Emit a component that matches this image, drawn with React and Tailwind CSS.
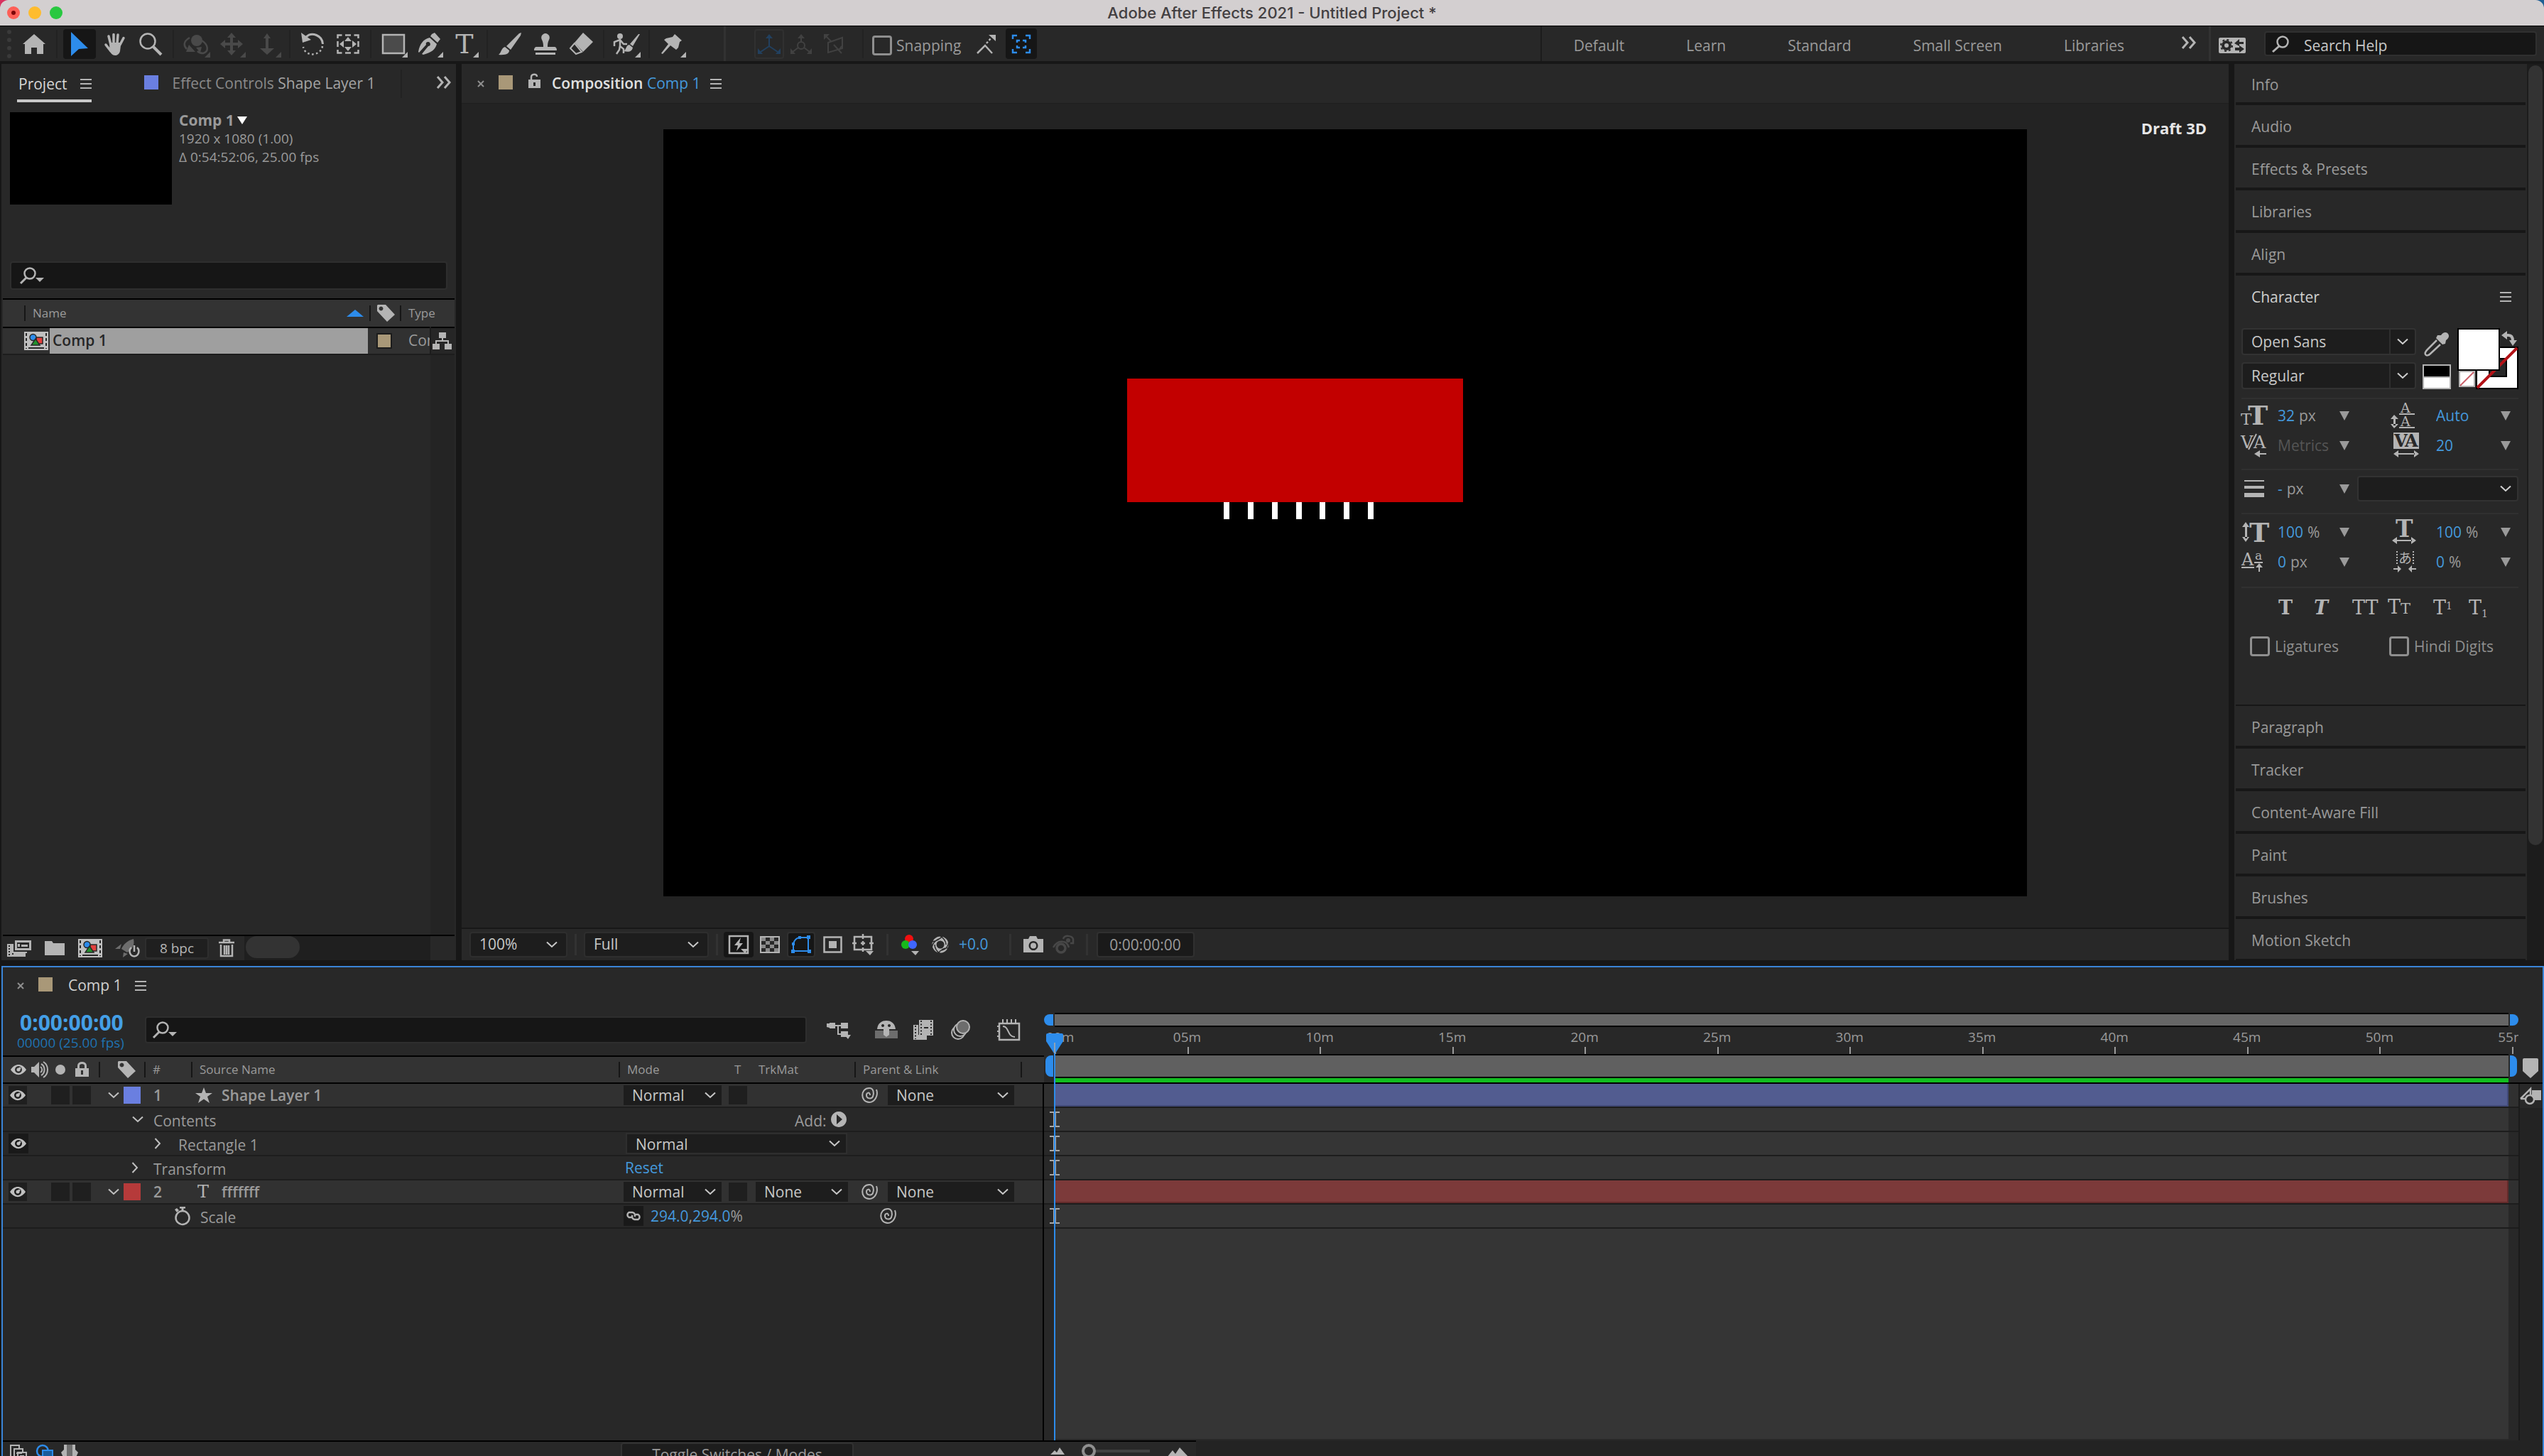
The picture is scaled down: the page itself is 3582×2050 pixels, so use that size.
import { useState } from "react"

const DURATION = 54.87

const layers = [
  { id: "1", kind: "layer", name: "Shape Layer 1", type: "shape", swatch: "bg-[#6a7fe0]", bar: "bg-[#525c90] border-[#414a78]" },
  { id: "contents", kind: "group", name: "Contents", open: true },
  { id: "rect", kind: "item", name: "Rectangle 1" },
  { id: "transform", kind: "group", name: "Transform", open: false },
  { id: "2", kind: "layer", name: "fffffff", type: "text", swatch: "bg-[#b63a3a]", bar: "bg-[#7c3a3a] border-[#632b2b]" },
  { id: "scale", kind: "property", name: "Scale" },
]

const marks = ["00m", "05m", "10m", "15m", "20m", "25m", "30m", "35m", "40m", "45m", "50m", "55m"]

/* ---------- Small shared pieces ---------- */

function Svg({ w, h, className = "", children }) {
  return (
    <svg width={w} height={h} viewBox={`0 0 ${w} ${h}`} fill="currentColor" className={`shrink-0 overflow-visible ${className}`} aria-hidden="true">
      {children}
    </svg>
  )
}

function Chevron({ className = "" }) {
  return (
    <Svg w={16} h={10} className={className}>
      <path d="M1 1.500l7 6.500 7-6.500" fill="none" stroke="currentColor" strokeWidth="2" />
    </Svg>
  )
}

function Triangle({ className = "text-[#9a9a9a]" }) {
  return (
    <Svg w={14} h={13} className={className}>
      <path d="M0 0h14L7 13z" />
    </Svg>
  )
}

function MenuLines() {
  return (
    <button aria-label="Panel menu" className="text-[#b4b4b4]">
      <Svg w={16} h={14}>
        <path d="M0 0h16v2H0zM0 6h16v2H0zM0 12h16v2H0z" />
      </Svg>
    </button>
  )
}

function MoreChevrons() {
  return (
    <button aria-label="Show more" className="text-[#b4b4b4]">
      <Svg w={22} h={18}>
        <path d="M2 1l7 8-7 8M12 1l7 8-7 8" fill="none" stroke="currentColor" strokeWidth="3" />
      </Svg>
    </button>
  )
}

function CloseX() {
  return (
    <button aria-label="Close tab" className="text-[#8f8f8f]">
      <Svg w={10} h={10}>
        <path d="M1 1l8 8M9 1L1 9" stroke="currentColor" strokeWidth="2" />
      </Svg>
    </button>
  )
}

function Select({ label, options, className = "", chevron = "right-3", split }) {
  return (
    <span className={`relative flex items-center bg-[#1d1d1d] text-[#c8c8c8] ${className}`}>
      <select aria-label={label} className="h-full w-full appearance-none bg-transparent pl-3 outline-none">
        {options.map((o) => (
          <option key={o}>{o}</option>
        ))}
      </select>
      {split && <span className="pointer-events-none absolute inset-y-0 right-[34px] w-0.5 bg-[#2e2e2e]" />}
      <Chevron className={`pointer-events-none absolute ${chevron}`} />
    </span>
  )
}

function SearchIcon() {
  return (
    <Svg w={34} h={24} className="text-[#b4b4b4]">
      <circle cx="14" cy="9" r="7.500" fill="none" stroke="currentColor" strokeWidth="2.500" />
      <path d="M9 15l-8 8" stroke="currentColor" strokeWidth="3" />
      <path d="M22 15h12l-6 6z" />
    </Svg>
  )
}

function TagIcon() {
  return (
    <Svg w={25} h={24} className="text-[#b4b4b4]">
      <path fillRule="evenodd" d="M1 0h11l13 14-11 10L0 9V1zM5.500 2.500a3 3 0 1 0 .01 0z" />
    </Svg>
  )
}

function EyeIcon() {
  return (
    <Svg w={22} h={16} className="text-[#c0c0c0]">
      <path fillRule="evenodd" d="M0 8C6-1.500 16-1.500 22 8 16 17.500 6 17.500 0 8zM11 3a5 5 0 1 0 .01 0z" />
      <circle cx="11" cy="8" r="2.500" />
      <circle cx="13" cy="6" r="1.500" />
    </Svg>
  )
}

function CompIcon() {
  return (
    <Svg w={34} h={26} className="text-[#c0c0c0]">
      <path d="M0 0h34v26H0z" />
      <path d="M3 2v22M31 2v22" stroke="#282828" strokeWidth="2" strokeDasharray="4 3" />
      <path d="M6 23h22" stroke="#282828" strokeWidth="2" />
      <rect x="17" y="8" width="9" height="9" fill="#e3403c" stroke="#282828" strokeWidth="1.500" />
      <circle cx="12.500" cy="8" r="4.500" fill="#2d8ceb" stroke="#282828" strokeWidth="1.500" />
      <path d="M16 10l6 9H10z" fill="#23912d" stroke="#282828" strokeWidth="1.500" />
    </Svg>
  )
}

function PickWhip() {
  return (
    <button aria-label="Pick whip" className="text-[#b4b4b4]">
      <Svg w={24} h={22}>
        <path
          d="M12 11C12 6 7 7 7 11c0 5 7 6 9 2 2-5 1-12-5-12C-2 1-2 21 11 21c8 0 13-10 10-18"
          fill="none"
          stroke="currentColor"
          strokeWidth="2"
        />
      </Svg>
    </button>
  )
}

/* ---------- Title bar and tools ---------- */

function TitleBar() {
  return (
    <div className="bg-linear-to-r from-[#d8315f] to-[#1d5f94]">
      <header className="flex h-9 items-center rounded-t-[12px] bg-[#d3cfd0] px-[10px]">
        <div className="flex flex-1 items-center gap-3">
          <button aria-label="Close" className="flex size-[18px] items-center justify-center rounded-full bg-[#fe5f57]">
            <span className="size-[6px] rounded-full bg-[#7d0508]" />
          </button>
          <button aria-label="Minimize" className="size-[18px] rounded-full bg-[#febc2e]" />
          <button aria-label="Zoom" className="size-[18px] rounded-full bg-[#28c840]" />
        </div>
        <h1 className="font-['Inter',sans-serif] text-[22px] leading-6 font-medium text-[#434042]">
          Adobe After Effects 2021 - Untitled Project *
        </h1>
        <div className="flex-1" />
      </header>
    </div>
  )
}

const toolGroups = [
  [
    {
      name: "Home",
      w: 32,
      h: 28,
      art: <path d="M16 0l16 14h-3v14h-9v-9h-8v9H3V14H0z" />,
    },
  ],
  [
    { name: "Selection", w: 24, h: 34, active: true, art: <path d="M0 0l24 23-13 1L0 34z" /> },
    {
      name: "Hand",
      w: 30,
      h: 32,
      art: (
        <>
          <path d="M9 17L6 5M13 15V2.500M18 15l1-12M22 17l5-9.500M9 26l-7-9" stroke="currentColor" strokeWidth="3.500" strokeLinecap="round" />
          <path d="M7.500 14h16L22 26c-1 4-4 6-7 6-4 0-6-3-8-7z" />
        </>
      ),
    },
    {
      name: "Zoom",
      w: 32,
      h: 32,
      art: (
        <>
          <circle cx="12" cy="12" r="10.500" fill="none" stroke="currentColor" strokeWidth="2.500" />
          <path d="M20 20l11 11" stroke="currentColor" strokeWidth="4" />
        </>
      ),
    },
  ],
  [
    {
      name: "Orbit",
      w: 36,
      h: 30,
      off: true,
      menu: true,
      art: (
        <>
          <circle cx="19" cy="10" r="8" />
          <path d="M9 6C-1 12 1 18 5 22M26 10c10 6 10 16 2 18-3 0-6-1-8-3" fill="none" stroke="currentColor" strokeWidth="2.500" />
          <path d="M4 26l4-10 9 10zM18 20l8-1-2 8z" />
        </>
      ),
    },
    {
      name: "Pan camera",
      w: 32,
      h: 32,
      off: true,
      menu: true,
      art: <path d="M16 0l6 7h-4v7h7v-4l7 6-7 6v-4h-7v7h4l-6 7-6-7h4v-7H7v4l-7-6 7-6v4h7V7h-4z" />,
    },
    { name: "Dolly", w: 22, h: 30, off: true, menu: true, art: <path d="M11 0l5 7h-3v14h8L11 30 1 21h8V7H6z" /> },
  ],
  [
    {
      name: "Rotation",
      w: 32,
      h: 32,
      art: (
        <>
          <path d="M7 6c8-8 23-2 23.500 10" fill="none" stroke="currentColor" strokeWidth="3" />
          <path d="M30 19c-2 14-24 16-27 1" fill="none" stroke="currentColor" strokeWidth="2.500" strokeDasharray="2.500 3.500" />
          <path d="M0 0l2 14 12-4z" />
        </>
      ),
    },
    {
      name: "Pan behind",
      w: 32,
      h: 28,
      art: (
        <>
          <path
            d="M1.500 6V1.500h6M12 1.500h8M24.500 1.500h6V6M30.500 10v8M30.500 22v4.500h-6M20 26.500h-8M7.500 26.500h-6V22M1.500 18v-8"
            fill="none"
            stroke="currentColor"
            strokeWidth="2.500"
          />
          <path d="M16 4l5 6H11zM16 24l5-6H11zM4 14l6-5v10zM28 14l-6-5v10z" />
        </>
      ),
    },
  ],
  [
    { name: "Rectangle", w: 32, h: 28, menu: true, art: <rect x="1" y="1" width="30" height="26" fill="#4b4b4b" stroke="currentColor" strokeWidth="2.500" /> },
    {
      name: "Pen",
      w: 32,
      h: 32,
      menu: true,
      art: (
        <>
          <path d="M20 2l4-2 8 9-4 5-10-9z" />
          <path fillRule="evenodd" d="M17 7l10 9c-2 8-8 12-19 15l-2-1 9-11a3 3 0 1 0-3-2L2 28l-1-1C3 16 8 9 17 7z" />
        </>
      ),
    },
    {
      name: "Type",
      w: 28,
      h: 30,
      menu: true,
      art: (
        <text x="14" y="28" textAnchor="middle" fontSize="38" fontFamily="DejaVu Serif, serif">
          T
        </text>
      ),
    },
  ],
  [
    {
      name: "Brush",
      w: 32,
      h: 32,
      art: <path d="M32 0l-1 4-14 20-6-5L29 1zM9 20l6 5c0 4-4 7-15 6 4-3 4-10 9-11z" />,
    },
    {
      name: "Clone stamp",
      w: 32,
      h: 30,
      art: <path d="M16 0a6 6 0 0 1 5 9c-2 4-2 7-2 10h9c3 0 4 2 4 5H0c0-3 1-5 4-5h9c0-3 0-6-2-10a6 6 0 0 1 5-9zM2 27h28v3H2z" />,
    },
    {
      name: "Eraser",
      w: 34,
      h: 32,
      art: (
        <>
          <path d="M20 0l14 13-14 14L8 14z" />
          <path d="M8 15L2 22l8 8 8-3z" fill="none" stroke="currentColor" strokeWidth="2" />
        </>
      ),
    },
  ],
  [
    {
      name: "Roto brush",
      w: 38,
      h: 30,
      menu: true,
      art: (
        <>
          <circle cx="10" cy="4" r="4" />
          <path d="M10 9v9l5 4v6M10 17l-1 6-4 6M2 18V12l8-3 5 6h5" fill="none" stroke="currentColor" strokeWidth="2.500" />
          <path d="M38 1L28 18l-4-3L36 1zM23 16l5 4c-1 5-5 7-13 5 4-2 3-8 8-9z" />
        </>
      ),
    },
  ],
  [
    {
      name: "Puppet pin",
      w: 30,
      h: 28,
      menu: true,
      art: <path d="M19 0l10 9-3 2-2 8-3 3-8-6L2 28l-2-1 10-13-6-6 3-2 9-2z" />,
    },
  ],
]

function ToolBar() {
  return (
    <nav className="flex h-[50px] items-stretch border-t border-black bg-[#282828] text-[#b4b4b4]">
      <div className="flex w-[23px] items-center pl-[10px]">
        <span className="h-10 w-0 border-l-[6px] border-dotted border-[#3a3a3a]" />
      </div>
      {toolGroups.map((group, g) => (
        <div key={g} className="flex items-center">
          {g > 0 && <span className="mx-[6px] h-10 w-0.5 bg-[#222]" />}
          {group.map((t) => (
            <button
              key={t.name}
              aria-label={t.name}
              className={`relative mx-0.5 flex h-[42px] w-[46px] items-center justify-center rounded ${t.active ? "bg-[#161616] text-[#2d8ceb]" : ""} ${t.off ? "text-[#494949]" : ""}`}
            >
              <Svg w={t.w} h={t.h}>
                {t.art}
              </Svg>
              {t.menu && (
                <Svg w={8} h={8} className="absolute right-[3px] bottom-[2px]">
                  <path d="M8 0v8H0z" />
                </Svg>
              )}
            </button>
          ))}
        </div>
      ))}

      <span className="ml-12 w-[3px] bg-[#323232]" />
      <div className="ml-10 flex items-center text-[#414141]">
        <button aria-label="Local axis" className="flex h-[42px] w-[42px] items-center justify-center rounded border-2 border-[#303030] text-[#22405f]">
          <Svg w={32} h={28}>
            <path d="M16 4v13L4 25M16 17l12 8" fill="none" stroke="currentColor" strokeWidth="2" />
            <path d="M16 0l5 6H11zM0 28v-8l7 8zM32 28v-8l-7 8z" />
          </Svg>
        </button>
        <button aria-label="World axis" className="flex w-12 justify-center">
          <Svg w={30} h={28}>
            <path d="M15 4v7M11 19l-8 6M19 19l8 6" stroke="currentColor" strokeWidth="2" />
            <circle cx="15" cy="16" r="5" fill="none" stroke="currentColor" strokeWidth="2" />
            <path d="M15 0l5 6H10zM0 28v-8l7 8zM30 28v-8l-7 8z" />
          </Svg>
        </button>
        <button aria-label="View axis" className="flex w-11 justify-center">
          <Svg w={28} h={28}>
            <path d="M2 2l8 8M6 12l20-7v15l-20 6zM14 15l11 12M25 17l-4 6" fill="none" stroke="currentColor" strokeWidth="2" />
            <path d="M0 0h8L0 8z" />
          </Svg>
        </button>
      </div>
      <span className="my-1 ml-[18px] w-0.5 bg-[#222]" />
      <div className="flex items-center pt-1 pl-3 text-[21px] leading-7 text-[#9a9a9a]">
        <input id="snapping" type="checkbox" className="size-[28px] appearance-none rounded border-[3px] border-[#8f8f8f]" />
        <label htmlFor="snapping" className="pl-[6px]">
          Snapping
        </label>
      </div>
      <div className="flex items-center gap-[14px] pl-[22px]">
        <button aria-label="Snap to edges">
          <Svg w={27} h={28}>
            <path d="M1 27l11-11 10 11" fill="none" stroke="currentColor" strokeWidth="2.500" />
            <path d="M14 13l6-7" stroke="currentColor" strokeWidth="2.500" strokeDasharray="3 2.500" />
            <path d="M17 1h10v9z" />
          </Svg>
        </button>
        <button aria-label="Snap to features" className="flex h-[43px] w-11 items-center justify-center rounded bg-[#161616] text-[#2d8ceb]">
          <Svg w={26} h={26}>
            <path d="M1 6V1h6M19 1h6v5M25 20v5h-6M7 25H1v-5M7 11V8h4M15 8h4v3M19 15v3h-4M11 18H7v-3" fill="none" stroke="currentColor" strokeWidth="2.500" />
          </Svg>
        </button>
      </div>

      <div className="ml-auto flex items-stretch border-l-2 border-[#1c1c1c] pl-[45px] text-[21px] leading-7 text-[#9a9a9a]">
        <div className="flex items-center gap-[87px] pt-1">
          <button>Default</button>
          <button>Learn</button>
          <button>Standard</button>
          <button>Small Screen</button>
          <button>Libraries</button>
        </div>
        <div className="flex items-center pb-1 pl-[80px]">
          <MoreChevrons />
        </div>
        <span className="ml-[17px] w-[3px] bg-[#323232]" />
        <button aria-label="Workspace settings" className="ml-[11px] pt-1 text-[#b4b4b4]">
          <Svg w={38} h={22}>
            <rect width="38" height="22" rx="2" />
            <circle cx="11" cy="11" r="5" fill="none" stroke="#282828" strokeWidth="4" />
            <circle cx="11" cy="11" r="8" fill="none" stroke="#282828" strokeWidth="2" strokeDasharray="3 3.300" />
            <path d="M22 8l7-6v4h6v3h-6v3zM36 16l-7-5v3h-6v4h6v3z" fill="#282828" />
          </Svg>
        </button>
        <label className="my-[7px] mr-[10px] ml-[26px] flex w-[384px] items-center rounded border-2 border-[#303030] bg-[#161616] pl-2">
          <Svg w={26} h={24} className="text-[#b4b4b4]">
            <circle cx="16" cy="9" r="7.500" fill="none" stroke="currentColor" strokeWidth="2.500" />
            <path d="M11 15l-9 8" stroke="currentColor" strokeWidth="3" />
          </Svg>
          <input aria-label="Search help" placeholder="Search Help" className="w-full bg-transparent pt-1 pl-[20px] outline-none placeholder:text-[#c8c8c8]" />
        </label>
      </div>
    </nav>
  )
}

/* ---------- Project panel ---------- */

function HeadMark() {
  return <span className="h-[22px] w-0.5 shrink-0 bg-[#161616]" />
}

function ProjectPanel() {
  return (
    <aside className="flex w-[640px] shrink-0 flex-col bg-[#282828] px-0.5">
      <div className="flex h-14 items-center pl-5">
        <div className="flex items-center gap-[18px] border-b-4 border-[#c8c8c8] pt-[9px] pb-[5px] text-[#d6d6d6]">
          <span className="pl-0.5 text-[21px] leading-[34px]">Project</span>
          <MenuLines />
        </div>
        <span className="mr-5 mb-1 ml-[74px] size-5 bg-[#6a7fe0]" />
        <button className="text-[21px] text-[#8a8a8a]">
          Effect Controls <span className="text-[#a4a4a4]">Shape Layer 1</span>
        </button>
        <span className="ml-auto h-10 w-0.5 bg-[#222]" />
        <div className="flex pr-1 pb-1 pl-12">
          <MoreChevrons />
        </div>
      </div>

      <div className="flex gap-[10px] pt-3 pl-[10px] text-[19px] leading-[26px] text-[#9a9a9a]">
        <div className="h-[130px] w-[228px] bg-black" />
        <div className="-mt-0.5">
          <button className="flex items-center gap-1 text-[21px] leading-[26px] font-bold">
            Comp 1 <Svg w={14} h={11} className="text-white"><path d="M0 0h14L7 11z" /></Svg>
          </button>
          <p>1920 x 1080 (1.00)</p>
          <p>Δ 0:54:52:06, 25.00 fps</p>
        </div>
      </div>

      <label className="mx-[10px] mt-20 mb-3 flex h-10 items-center rounded border-2 border-[#2e2e2e] bg-[#161616] pl-3">
        <SearchIcon />
        <input aria-label="Search project" className="w-full bg-transparent outline-none" />
      </label>

      <table className="w-full table-fixed border-collapse">
        <colgroup>
          <col className="w-[30px]" />
          <col />
          <col className="w-[43px]" />
          <col className="w-[43px]" />
          <col className="w-[34px]" />
        </colgroup>
        <thead className="border-y-2 border-black bg-[#333] text-left text-[17px] text-[#9a9a9a]">
          <tr className="h-10">
            <th />
            <th className="font-normal">
              <div className="flex items-center pr-2">
                <HeadMark />
                <span className="flex-1 pl-[10px]">Name</span>
                <Svg w={24} h={10} className="text-[#2d8ceb]">
                  <path d="M12 0l12 10H0z" />
                </Svg>
              </div>
            </th>
            <th>
              <div className="flex items-center gap-[9px]">
                <HeadMark />
                <TagIcon />
              </div>
            </th>
            <th className="overflow-visible font-normal" colSpan="2">
              <div className="flex items-center gap-[10px]">
                <HeadMark />
                Type
              </div>
            </th>
          </tr>
        </thead>
        <tbody>
          <tr className="h-[38px] border-b-2 border-[#1d1d1d] bg-[#313131] text-[21px]">
            <td />
            <td className="p-0">
              <div className="flex h-9 items-center gap-0.5">
                <CompIcon />
                <span className="mr-0.5 flex h-full flex-1 items-center bg-[#9f9f9f] pl-[4px] font-semibold text-[#262626]">Comp 1</span>
              </div>
            </td>
            <td>
              <div className="ml-[10px] size-[22px] border-2 border-[#1c1c1c] bg-[#a99878]" />
            </td>
            <td className="overflow-hidden pl-3 whitespace-nowrap text-[#9a9a9a]">Composition</td>
            <td className="border-l-2 border-[#1c1c1c] bg-[#262626] text-[#b4b4b4]">
              <Svg w={28} h={24} className="ml-0.5">
                <path d="M9 0h10v8H9zM0 16h10v8H0zM17 16h10v8H17z" />
                <path d="M14 8v4M5 16v-4h17v4" fill="none" stroke="currentColor" strokeWidth="2" />
              </Svg>
            </td>
          </tr>
        </tbody>
      </table>
      <div className="flex flex-1 justify-end">
        <div className="w-[34px] bg-[#242424]" />
      </div>

      <div className="flex h-9 items-stretch border-t-2 border-black text-[#b4b4b4]">
        <div className="flex items-center pr-4 pl-[6px]">
          <button aria-label="Interpret footage">
            <Svg w={34} h={23}>
              <path fillRule="evenodd" d="M11 0h23v14H11zM14 3v8h17V3zM15 5h3v4h-3zM20 6h9v3h-9zM0 5h9v11h19v2h-2v5H0zM2 7v2h2V7zM2 11v2h2v-2zM2 15v2h2v-2zM2 19v2h2v-2zM7 18v2h2v-2z" />
            </Svg>
          </button>
          <button aria-label="New folder" className="pl-[19px]">
            <Svg w={28} h={20}>
              <path d="M0 0h10l2 3h16v17H0z" />
            </Svg>
          </button>
          <button aria-label="New composition" className="pl-[19px]">
            <CompIcon />
          </button>
          <button aria-label="GPU acceleration" className="pl-[18px]">
            <Svg w={34} h={26}>
              <path d="M26 0C18 2 12 7 9 14l8 5C24 15 28 9 26 0zM9 7L0 14h7zM12 19l-1 7 7-5z" fill="#6d6d6d" />
              <path d="M23 12a6.500 7 0 1 0 8 0M27 9v9" fill="none" stroke="currentColor" strokeWidth="2.500" />
            </Svg>
          </button>
        </div>
        <button className="my-0.5 -ml-2 w-[90px] rounded border-2 border-[#2e2e2e] bg-[#1f1f1f] text-[19px] leading-6">8 bpc</button>
        <button aria-label="Delete" className="px-[14px]">
          <Svg w={22} h={26}>
            <path d="M0 5h22M7 5V1.500h8V5M3 8v16h16V8M8 9v13M11 9v13M14 9v13" fill="none" stroke="currentColor" strokeWidth="2.500" />
          </Svg>
        </button>
        <div className="flex-1 bg-[#1f1f1f] p-0.5 pt-0">
          <div className="h-[31px] w-[76px] rounded-full bg-[#333]" />
        </div>
        <div className="w-[34px]" />
      </div>
    </aside>
  )
}

/* ---------- Composition viewer ---------- */

function Divider() {
  return <span className="h-[30px] w-[3px] shrink-0 bg-[#323232]" />
}

function CompositionPanel() {
  return (
    <main className="flex min-w-0 flex-1 flex-col bg-[#232323]">
      <div className="flex h-14 items-center border-b border-[#1f1f1f] bg-[#282828] pl-[22px] text-[21px]">
        <CloseX />
        <span className="mb-1 ml-5 size-5 bg-[#a99878]" />
        <button aria-label="Lock" className="mb-2 ml-[22px] text-[#b4b4b4]">
          <Svg w={17} h={22}>
            <path d="M4 10V5.500C4 1 12 0 12 5" fill="none" stroke="currentColor" strokeWidth="2.500" />
            <path fillRule="evenodd" d="M0 9h17v12H0zM7 13v5h3v-5z" />
          </Svg>
        </button>
        <h2 className="pl-4 font-semibold text-[#e2e2e2]">
          Composition <span className="font-normal text-[#4499dd]">Comp 1</span>
        </h2>
        <div className="flex pl-[13px]">
          <MenuLines />
        </div>
      </div>

      <div className="relative flex justify-center pt-9 pb-11">
        <svg viewBox="0 0 1920 1080" className="w-[1920px] max-w-full bg-black" role="img" aria-label="Composition preview">
          <rect x="653" y="351" width="473" height="174" fill="#c20000" />
          {[789, 823, 857, 891, 924, 958, 992].map((x) => (
            <rect key={x} x={x} y="525" width="8" height="24" fill="#fff" />
          ))}
        </svg>
        <button className="absolute top-5 right-[31px] text-[22px] leading-7 font-bold text-[#e6e6e6]">Draft 3D</button>
      </div>

      <div className="flex h-[46px] items-center border-t-2 border-[#171717] bg-[#282828] pl-[11px] text-[21px] text-[#b4b4b4]">
        <Select label="Magnification" options={["100%"]} className="h-9 w-[138px] rounded border-2 border-[#2e2e2e]" />
        <span className="w-[10px]" />
        <Divider />
        <span className="w-[10px]" />
        <Select label="Resolution" options={["Full"]} className="h-9 w-[176px] rounded border-2 border-[#2e2e2e]" />
        <span className="w-[10px]" />
        <Divider />
        <div className="flex items-center pl-2">
          <button aria-label="Fast previews" className="flex h-9 w-[42px] items-center justify-center rounded bg-[#161616]">
            <Svg w={28} h={26}>
              <path d="M1 1h26v24H1z" fill="none" stroke="currentColor" strokeWidth="2.500" />
              <path d="M17 3L8 14h5l-2 8 9-11h-5zM17 19h11l-5 6z" />
            </Svg>
          </button>
          <button aria-label="Transparency grid" className="pl-[9px]">
            <Svg w={28} h={24}>
              <path d="M1 1h26v22H1z" fill="none" stroke="currentColor" strokeWidth="2" />
              <path d="M2 2h6v5H2zM14 2h6v5h-6zM8 7h6v5H8zM20 7h6v5h-6zM2 12h6v5H2zM14 12h6v5h-6zM8 17h6v5H8zM20 17h6v5h-6z" fill="#8a8a8a" />
            </Svg>
          </button>
          <button aria-label="Mask visibility" className="ml-[10px] flex h-9 w-10 items-center justify-center rounded border-2 border-[#303030] bg-[#161616] text-[#2d8ceb]">
            <Svg w={28} h={26}>
              <path d="M3 22V12Q5 4 12 3h12v19z" fill="none" stroke="currentColor" strokeWidth="2" />
              <path d="M0 20h5v5H0zM23 20h5v5h-5zM22 0h5v5h-5zM10 1h4v4h-4zM1 10h4v4H1z" />
            </Svg>
          </button>
          <button aria-label="Region of interest" className="pl-[11px]">
            <Svg w={27} h={24}>
              <path d="M1.500 1.500h24v21h-24z" fill="none" stroke="currentColor" strokeWidth="2.500" />
              <path d="M8 7h11v10H8z" />
            </Svg>
          </button>
          <button aria-label="Grid and guides" className="pl-[14px]">
            <Svg w={30} h={30}>
              <path d="M3 4h24v18H3zM15 0v7M15 10v6M15 19v6M0 13h6M12 13h6M24 13h6" fill="none" stroke="currentColor" strokeWidth="2.500" />
              <path d="M19 24h11l-5 6z" />
            </Svg>
          </button>
          <span className="w-[18px]" />
          <Divider />
          <button aria-label="Channels" className="pl-[18px]">
            <Svg w={26} h={30}>
              <circle cx="11" cy="7" r="6" fill="#f01010" />
              <circle cx="6" cy="15" r="6" fill="#17b81c" />
              <circle cx="16" cy="15" r="6" fill="#3f66ff" />
              <path d="M14 24h11l-5 6z" />
            </Svg>
          </button>
          <button aria-label="Reset exposure" className="pl-4">
            <Svg w={26} h={26}>
              <circle cx="13" cy="13" r="8.500" fill="none" stroke="currentColor" strokeWidth="6" />
              <path d="M1 9C7 8 12 6 16 1M12 0c6 4 9 8 9 13M25 9c-1 7-5 11-10 12M25 18c-6-1-12 2-15 8M13 26c-6-4-8-8-8-13M1 17c1-6 5-10 10-12" fill="none" stroke="#282828" strokeWidth="1.500" />
            </Svg>
          </button>
          <button className="pl-[13px] text-[#4499dd]">+0.0</button>
          <span className="w-[29px]" />
          <Divider />
          <button aria-label="Take snapshot" className="pl-[17px]">
            <Svg w={28} h={24}>
              <path fillRule="evenodd" d="M0 4h7l2-4h9l2 4h8v19H0zM14 7a6.500 6.500 0 1 0 .01 0z" />
              <circle cx="14" cy="13.500" r="4" />
            </Svg>
          </button>
          <button aria-label="Show snapshot" className="pl-[14px] text-[#474747]">
            <Svg w={30} h={26}>
              <circle cx="11" cy="18" r="6" fill="none" stroke="currentColor" strokeWidth="3.500" />
              <path d="M0 17c4-7 9-9 14-8M22 17c-2-6-5-8-8-8M14 5c2-6 12-5 14 0v6h-4" fill="none" stroke="currentColor" strokeWidth="2.500" />
              <circle cx="21" cy="7" r="3" />
            </Svg>
          </button>
          <span className="w-4" />
          <Divider />
          <button className="ml-3 h-9 w-[138px] rounded border-2 border-[#303030] bg-[#1a1a1a] leading-6 text-[#9a9a9a]">0:00:00:00</button>
        </div>
      </div>
    </main>
  )
}

/* ---------- Right hand panels ---------- */

function PanelTab({ name, size = "h-[60px] border-b-4" }) {
  return <button className={`mx-0.5 flex items-center border-[#171717] pt-1 pl-[22px] text-left ${size}`}>{name}</button>
}

function Field({ label, icon, value, unit, disabled, pad = "w-[64px]" }) {
  return (
    <div className="flex h-[42px] items-center">
      <span className={`${pad} shrink-0 text-[#b4b4b4]`}>{icon}</span>
      <span className="flex flex-1 items-baseline gap-[6px]">
        <input
          aria-label={label}
          defaultValue={value}
          className={`field-sizing-content bg-transparent outline-none ${disabled ? "text-[#555]" : "text-[#4499dd]"}`}
        />
        {unit && <span>{unit}</span>}
      </span>
      <Triangle />
    </div>
  )
}

function Serif({ x, y, size, weight = "normal", style = "normal", fill = "currentColor", children }) {
  return (
    <text x={x} y={y} fontSize={size} fontWeight={weight} fontStyle={style} fill={fill} fontFamily="DejaVu Serif, serif">
      {children}
    </text>
  )
}

function CharacterPanel() {
  return (
    <section className="mx-0.5 flex h-[606px] flex-col border-b-2 border-[#171717] pr-[10px] pl-2">
      <div className="flex h-[60px] items-center justify-between pr-[10px] pl-[14px]">
        <h2 className="text-[#d0d0d0]">Character</h2>
        <MenuLines />
      </div>

      {/* Font family, style and colours */}
      <div className="flex h-[112px] justify-between pt-[14px]">
        <div className="flex w-[246px] flex-col gap-[10px]">
          <Select split label="Font family" options={["Open Sans"]} chevron="right-[9px] text-[#d0d0d0]" className="h-[38px] rounded border-2 border-[#323232]" />
          <Select split label="Font style" options={["Regular"]} chevron="right-[9px] text-[#d0d0d0]" className="h-[38px] rounded border-2 border-[#323232]" />
        </div>
        <div className="flex flex-col items-center justify-between pt-[6px] pb-3">
          <button aria-label="Eyedropper" className="text-[#b4b4b4]">
            <Svg w={34} h={33}>
              <path d="M23 4c3-5 8-5 10-2s1 6-3 9l-1 5-4 1-9-9 2-4z" />
              <path d="M17 11L4 24c-3 3-4 5-3 7s4 2 7-1l14-13" fill="none" stroke="currentColor" strokeWidth="2.500" />
            </Svg>
          </button>
          <button aria-label="Black or white" className="flex h-[35px] w-10 flex-col border-2 border-[#b4b4b4]">
            <span className="w-full flex-1 border-b-2 border-[#b4b4b4] bg-black" />
            <span className="w-full flex-1 bg-white" />
          </button>
        </div>
        <Svg w={86} h={88}>
          <path d="M27 27h58v58H27z" fill="#fff" stroke="#000" strokeWidth="2" />
          <path d="M45 43h24v25H45z" fill="#282828" stroke="#000" strokeWidth="2" />
          <path d="M28 84l56-56" stroke="#b31217" strokeWidth="4" />
          <path d="M3 61h21v21H3z" fill="#fff" stroke="#b4b4b4" strokeWidth="2" />
          <path d="M4 81l19-19" stroke="#c9606a" strokeWidth="2" />
          <path d="M1 1h58v58H1z" fill="#fff" stroke="#000" strokeWidth="2" />
          <path d="M67 10h5q6 0 6 8" fill="none" stroke="#b4b4b4" strokeWidth="4" />
          <path d="M62 10l8-6v12zM73 17h11l-6 8z" fill="#b4b4b4" />
        </Svg>
      </div>

      {/* Size, leading, kerning and tracking */}
      <div className="grid h-[100px] grid-cols-[152px_1fr] content-start gap-x-[58px] border-t-2 border-[#303030] pt-0.5 pr-[11px]">
        <Field
          label="Font size"
          pad="w-[51px]"
          value="32"
          unit="px"
          icon={
            <Svg w={38} h={30}>
              <Serif x={-1} y={28} size={23}>T</Serif>
              <Serif x={9} y={28} size={38} weight="bold">T</Serif>
            </Svg>
          }
        />
        <Field
          label="Leading"
          value="Auto"
          icon={
            <Svg w={34} h={36}>
              <Serif x={14} y={14} size={19}>A</Serif>
              <Serif x={14} y={33} size={19}>A</Serif>
              <path d="M12 15h22v2H12zM12 34h22v2H12zM4 21h3v11H4zM0 23l5-6 6 6zM0 30l5 6 6-6z" />
            </Svg>
          }
        />
        <Field
          label="Kerning"
          pad="w-[51px]"
          value="Metrics"
          disabled
          icon={
            <Svg w={36} h={36}>
              <Serif x={-1} y={22} size={24}>V</Serif>
              <Serif x={17} y={22} size={24}>A</Serif>
              <path d="M10 24L21 2" stroke="currentColor" strokeWidth="2" />
              <path d="M24 29h11v2H24zM18 30l8-5v10z" />
            </Svg>
          }
        />
        <Field
          label="Tracking"
          value="20"
          icon={
            <Svg w={40} h={36} className="ml-1">
              <path d="M0 0h36v23H0z" />
              <Serif x={1} y={20} size={24} weight="bold" fill="#282828">V</Serif>
              <Serif x={16} y={20} size={24} weight="bold" fill="#282828">A</Serif>
              <path d="M6 29h24v2H6zM0 30l7-5v10zM36 30l-7-5v10z" />
            </Svg>
          }
        />
      </div>

      {/* Stroke width and order */}
      <div className="flex h-[62px] items-center gap-[11px] border-t-2 border-[#303030] pb-2">
        <div className="w-[152px]">
          <Field
            label="Stroke width"
            pad="w-[51px]"
            value="-"
            unit="px"
            icon={
              <Svg w={32} h={24}>
                <path d="M4 0h28v2H4zM4 8h28v4H4zM4 18h28v6H4z" />
              </Svg>
            }
          />
        </div>
        <Select label="Stroke order" options={[""]} chevron="right-[8px] text-[#d0d0d0]" className="h-9 flex-1 rounded border-2 border-[#323232]" />
      </div>

      {/* Scale and shift */}
      <div className="grid h-[104px] grid-cols-[152px_1fr] content-start gap-x-[58px] border-t-2 border-[#303030] pt-1 pr-[11px]">
        <Field
          label="Vertical scale"
          pad="w-[51px]"
          value="100"
          unit="%"
          icon={
            <Svg w={38} h={28}>
              <Serif x={11} y={28} size={38} weight="bold">T</Serif>
              <path d="M5 5h3v18H5zM1 7l5-7 5 7zM1 21l5 7 5-7z" />
            </Svg>
          }
        />
        <Field
          label="Horizontal scale"
          value="100"
          unit="%"
          icon={
            <Svg w={38} h={34}>
              <Serif x={7} y={24} size={33} weight="bold">T</Serif>
              <path d="M8 28h22v2H8zM2 29l7-5v10zM36 29l-7-5v10z" />
            </Svg>
          }
        />
        <Field
          label="Baseline shift"
          pad="w-[51px]"
          value="0"
          unit="px"
          icon={
            <Svg w={32} h={28}>
              <Serif x={0} y={19} size={24}>A</Serif>
              <Serif x={19} y={11} size={17}>a</Serif>
              <path d="M0 21h18v2H0zM18 14h12v2H18zM24 20h2v8h-2zM20 22l5-6 5 6z" />
            </Svg>
          }
        />
        <Field
          label="Tsume"
          value="0"
          unit="%"
          icon={
            <Svg w={38} h={30} className="ml-1">
              <text x="7" y="17" fontSize="19" fontFamily="Noto Sans CJK JP, sans-serif">
                あ
              </text>
              <path d="M5 0v19M28 0v19" stroke="currentColor" strokeWidth="2" strokeDasharray="2 2" />
              <path d="M0 24h6v2H0zM6 20l5 5-5 5zM26 24h6v2h-6zM26 20l-5 5 5 5z" />
            </Svg>
          }
        />
      </div>

      {/* Faux styles */}
      <div className="flex h-[62px] items-center border-t-2 border-[#303030] pb-1 pl-[52px] font-['DejaVu_Serif',serif] text-[27px] leading-8 text-[#b4b4b4]">
        <button aria-label="Faux bold" className="w-[50px] text-left font-bold">T</button>
        <button aria-label="Faux italic" className="w-[54px] text-left font-bold italic">T</button>
        <button aria-label="All caps" className="w-[50px] text-left">TT</button>
        <button aria-label="Small caps" className="w-[64px] text-left">T<small className="text-[21px]">T</small></button>
        <button aria-label="Superscript" className="w-[50px] text-left">T<sup className="text-[14px]">1</sup></button>
        <button aria-label="Subscript" className="text-left">T<sub className="text-[14px]">1</sub></button>
      </div>

      <div className="flex h-10 items-center pt-1 pl-3 text-[#8f8f8f]">
        <input id="ligatures" type="checkbox" className="size-[28px] appearance-none rounded border-[3px] border-[#8f8f8f]" />
        <label htmlFor="ligatures" className="w-[168px] pl-[7px]">
          Ligatures
        </label>
        <input id="hindi" type="checkbox" className="size-[28px] appearance-none rounded border-[3px] border-[#8f8f8f]" />
        <label htmlFor="hindi" className="pl-[7px]">
          Hindi Digits
        </label>
      </div>
    </section>
  )
}

function SidePanels() {
  return (
    <aside className="flex w-[436px] shrink-0 bg-[#1c1c1c] text-[21px] leading-7 text-[#9a9a9a]">
      <div className="flex flex-1 flex-col bg-[#282828]">
        <PanelTab name="Info" size="h-[58px] border-b-4" />
        <PanelTab name="Audio" />
        <PanelTab name="Effects & Presets" />
        <PanelTab name="Libraries" />
        <PanelTab name="Align" />
        <CharacterPanel />
        <PanelTab name="Paragraph" />
        <PanelTab name="Tracker" />
        <PanelTab name="Content-Aware Fill" />
        <PanelTab name="Paint" />
        <PanelTab name="Brushes" />
        <PanelTab name="Motion Sketch" size="h-[58px] border-b-2" />
      </div>
      <div className="w-6 p-0.5">
        <div className="h-[1098px] rounded-full bg-[#333]" />
      </div>
    </aside>
  )
}

/* ---------- Timeline ---------- */

function Cell({ className = "", size = "h-[26px] w-[26px] bg-[#1f1f1f]", children }) {
  return <span className={`flex shrink-0 items-center justify-center ${size} ${className}`}>{children}</span>
}

function LayerRow({ layer }) {
  const [open, setOpen] = useState(true)
  return (
    <li className="flex h-[34px] items-center border-b-2 border-[#1d1d1d] bg-[#313131] pl-2">
      <Cell>
        <EyeIcon />
      </Cell>
      <Cell className="ml-[34px]" />
      <Cell className="ml-1" />
      <button aria-label="Expand layer" onClick={() => setOpen(!open)} className="w-[46px] pl-6 text-[#c0c0c0]">
        <Chevron className={open ? "" : "-rotate-90"} />
      </button>
      <span className={`size-6 shrink-0 ${layer.swatch}`} />
      <span className="w-[77px] pl-[18px] font-semibold">{layer.id}</span>
      <span className="w-[37px] text-[#b4b4b4]">
        {layer.type === "shape" ? (
          <Svg w={24} h={22}>
            <path d="M12 0l3 8h9l-7 5 3 9-8-5.500L4 22l3-9-7-5h9z" />
          </Svg>
        ) : (
          <Svg w={24} h={22}>
            <Serif x={3} y={19} size={24}>T</Serif>
          </Svg>
        )}
      </span>
      <span className="flex-1 font-semibold">{layer.name}</span>
      <div className="flex w-[590px] items-center">
        <Select label="Mode" options={["Normal"]} className="h-7 w-[138px]" chevron="right-2" />
        <Cell className="ml-[10px]" />
        {layer.type === "text" ? (
          <Select label="Track matte" options={["None"]} className="ml-3 h-7 w-[130px]" chevron="right-2" />
        ) : (
          <span className="ml-3 w-[130px]" />
        )}
        <span className="flex w-14 pl-[19px]">
          <PickWhip />
        </span>
        <Select label="Parent" options={["None"]} className="h-7 w-[178px]" chevron="right-2" />
      </div>
    </li>
  )
}

function PropertyRow({ layer }) {
  const indent = { group: "w-[178px]", item: "w-[174px]", property: "w-[241px]" }[layer.kind]
  return (
    <li className="flex h-[34px] items-center border-b-2 border-[#1d1d1d]">
      {layer.kind === "item" ? (
        <Cell className="ml-2" size="h-7 w-7 bg-[#191919]">
          <EyeIcon />
        </Cell>
      ) : null}
      <span className={`shrink-0 ${indent}`} />
      {layer.kind === "property" ? (
        <button aria-label="Stopwatch" className="w-[37px] text-[#b4b4b4]">
          <Svg w={24} h={26}>
            <circle cx="12" cy="15.500" r="9.500" fill="none" stroke="currentColor" strokeWidth="2.500" />
            <path d="M8 0h8v2.500h-2.500V6h-3V2.500H8zM1 4l3-2 3 3-3 3z" />
          </Svg>
        </button>
      ) : (
        <button aria-label="Expand" className={`flex text-[#c0c0c0] ${layer.kind === "group" ? "w-[34px]" : "w-[37px]"} ${layer.open ? "pl-1" : ""}`}>
          <Chevron className={layer.open ? "" : "-rotate-90"} />
        </button>
      )}
      <span className="flex-1 pt-1">{layer.name}</span>
      <div className="flex w-[590px] items-center">
        {layer.id === "contents" && (
          <>
            <span className="pt-1 pl-[241px]">Add:</span>
            <button aria-label="Add content" className="pl-[6px] text-[#b4b4b4]">
              <Svg w={22} h={22}>
                <path fillRule="evenodd" d="M11 0a11 11 0 1 0 .01 0zM8 4l8 7-8 7z" />
              </Svg>
            </button>
          </>
        )}
        {layer.id === "rect" && (
          <Select label="Blend mode" options={["Normal"]} className="ml-[3px] h-[30px] w-[312px] border-2 border-[#2e2e2e]" chevron="right-2" />
        )}
        {layer.id === "transform" && <button className="pl-0.5 text-[#4499dd]">Reset</button>}
        {layer.id === "scale" && (
          <>
            <Cell className="text-[#b4b4b4]" size="h-7 w-7 bg-[#191919]">
              <Svg w={26} h={14}>
                <path d="M10 9H6.500a4 4 0 0 1 0-7h5a4 4 0 0 1 3 6M16 5h3.500a4 4 0 0 1 0 7h-5a4 4 0 0 1-3-6" fill="none" stroke="currentColor" strokeWidth="2.500" />
              </Svg>
            </Cell>
            <span className="w-[333px] pl-[10px]">
              <button className="text-[#4499dd]">294.0</button>,<button className="text-[#4499dd]">294.0</button>%
            </span>
            <PickWhip />
          </>
        )}
      </div>
    </li>
  )
}

function Outline() {
  return (
    <div className="flex w-[1466px] shrink-0 flex-col">
      <div className="flex h-[72px] items-center pl-5">
        <button className="w-[180px] pt-2 text-left">
          <span className="block pl-1 text-[30px] leading-[29px] font-bold text-[#449fe6]">0:00:00:00</span>
          <span className="block text-[19px] leading-[29px] text-[#1f72b0]">00000 (25.00 fps)</span>
        </button>
        <label className="flex h-[38px] w-[932px] items-center rounded border-2 border-[#2e2e2e] bg-[#161616] pl-[9px]">
          <SearchIcon />
          <input aria-label="Search layers" className="w-full bg-transparent outline-none" />
        </label>
        <div className="flex flex-1 items-center pl-[28px] text-[#b4b4b4]">
          <button aria-label="Mini flowchart">
            <Svg w={34} h={26}>
              <path d="M8 7h14M16 7v12h6" fill="none" stroke="currentColor" strokeWidth="2" />
              <path d="M0 4l8-1v8L0 9zM4 3h8v8H4zM20 3h10v8H20zM20 15h10v8H20zM25 20h9l-4 6z" />
            </Svg>
          </button>
          <button aria-label="Hide shy layers" className="pl-[34px]">
            <Svg w={32} h={28}>
              <path d="M0 15h32v11H0z" fill="#6d6d6d" />
              <path fillRule="evenodd" d="M3 13C4 4 10 1 16 1s12 3 13 12h-9v8l-4 3-4-3v-8zM11 6a2 2 0 1 0 .01 0zM20 6a2 2 0 1 0 .01 0z" />
            </Svg>
          </button>
          <button aria-label="Frame blending" className="pl-[22px]">
            <Svg w={28} h={28}>
              <path d="M0 7h7v14h12v7H0z" />
              <path d="M8 0h20v22H8z" />
              <path d="M11 1v20M25 1v20M3 8v19" stroke="#282828" strokeWidth="2" strokeDasharray="2 2.500" />
              <path d="M15 10h6v2h-6z" fill="#282828" />
            </Svg>
          </button>
          <button aria-label="Motion blur" className="pl-6">
            <Svg w={28} h={28}>
              <circle cx="11" cy="18" r="9" fill="#282828" stroke="currentColor" strokeWidth="2" />
              <circle cx="14" cy="14" r="9" fill="#282828" stroke="currentColor" strokeWidth="2" />
              <circle cx="18" cy="10" r="9" fill="#6d6d6d" stroke="currentColor" strokeWidth="2" />
            </Svg>
          </button>
          <button aria-label="Graph editor" className="pl-[38px]">
            <Svg w={33} h={30}>
              <path d="M3 6h28v23H3z" fill="none" stroke="currentColor" strokeWidth="2.500" />
              <path d="M8 10c9 0 6 15 17 15M8 0v5M14 0v5M20 0v5M26 0v5M0 10h3M0 17h3M0 24h3" fill="none" stroke="currentColor" strokeWidth="2" />
            </Svg>
          </button>
        </div>
      </div>

      {/* Column heads */}
      <div className="flex h-10 items-center border-y-2 border-black bg-[#333] pl-[11px] text-[17px] text-[#9a9a9a]">
        <div className="flex w-[124px] items-center text-[#b4b4b4]">
          <EyeIcon />
          <Svg w={24} h={22} className="ml-[7px]">
            <path d="M0 7h4l7-7v22l-7-7H0z" />
            <path d="M13 7c3 2 3 6 0 8M14 3c6 3 6 13 0 16M17 0c8 5 8 17 0 22" fill="none" stroke="currentColor" strokeWidth="2" />
          </Svg>
          <Svg w={14} h={14} className="ml-[10px]">
            <circle cx="7" cy="7" r="7" />
          </Svg>
          <Svg w={19} h={22} className="ml-[14px]">
            <path d="M4.500 9V5.500C4.500 0 14.500 0 14.500 5.500V9" fill="none" stroke="currentColor" strokeWidth="3" />
            <path fillRule="evenodd" d="M0 9h19v12H0zM8 12v6h3v-6z" />
          </Svg>
        </div>
        <div className="flex w-[64px] items-center gap-[25px]">
          <HeadMark />
          <TagIcon />
        </div>
        <div className="flex w-[66px] items-center gap-[10px]">
          <HeadMark />#
        </div>
        <div className="flex flex-1 items-center gap-[10px]">
          <HeadMark />
          Source Name
        </div>
        <div className="flex w-[163px] items-center gap-[10px]">
          <HeadMark />
          Mode
        </div>
        <span className="w-[34px]">T</span>
        <span className="w-[135px]">TrkMat</span>
        <div className="flex w-[234px] items-center gap-[10px]">
          <HeadMark />
          Parent &amp; Link
        </div>
        <span className="flex w-[33px]">
          <HeadMark />
        </span>
      </div>

      <div className="flex flex-1 flex-col border-r-2 border-black">
        <ul className="text-[21px] leading-7 text-[#9a9a9a]">
          {layers.map((l) => (l.kind === "layer" ? <LayerRow key={l.id} layer={l} /> : <PropertyRow key={l.id} layer={l} />))}
        </ul>
      </div>
    </div>
  )
}

function Tracks() {
  return (
    <div className="relative flex min-w-0 flex-1 flex-col overflow-hidden pt-3">
      {/* Time navigator */}
      <div className="flex h-5 items-stretch">
        <span className="my-0.5 mr-0.5 w-[13px] rounded-l-full bg-[#2d8ceb]" />
        <span className="flex-1 border-y-2 border-black bg-[#666]" />
        <span className="my-0.5 ml-0.5 w-3 rounded-r-full bg-[#2d8ceb]" />
      </div>

      <ol className="ml-[15px] flex h-[38px] pt-0.5 text-[19px] leading-6 text-[#9a9a9a]">
        {marks.map((m, i) => (
          <li key={m} className="flex shrink-0 flex-col items-start" style={{ width: `calc((100% - 14px) * ${5 / DURATION})` }}>
            <span className={i === 0 ? "-ml-3" : "-translate-x-1/2"}>{m}</span>
            <span className="mt-0.5 h-[10px] w-0.5 bg-[#9a9a9a]" />
          </li>
        ))}
      </ol>

      {/* Work area and cache bar */}
      <div className="flex h-[34px] items-stretch">
        <span className="my-0.5 mr-0.5 ml-0.5 w-[11px] rounded-l-lg bg-[#2d8ceb]" />
        <span className="flex-1 border-y-2 border-black bg-[#606060]" />
        <span className="my-0.5 mr-0.5 ml-0.5 w-[10px] rounded-r-lg bg-[#2d8ceb]" />
      </div>
      <div className="h-2 border-b-2 border-black pr-[14px] pl-[15px]">
        <div className="h-full bg-[#12be20]" />
      </div>

      <ul>
        {layers.map((l) =>
          l.kind === "layer" ? (
            <li key={l.id} className="h-[34px] border-b-2 border-[#1d1d1d] bg-[#303030] pr-[14px] pl-[15px]">
              <div className={`h-full border-r-2 border-b-2 ${l.bar}`} />
            </li>
          ) : (
            <li key={l.id} className="h-[34px] border-b-2 border-[#1d1d1d] pr-[14px] pl-[15px]">
              <div className="relative flex h-full items-center bg-[#353535]">
                <Svg w={14} h={22} className="absolute -left-[7px] text-[#a8a8a8]">
                  <path d="M0 0h14v2H9v18h5v2H0v-2h5V2H0z" />
                </Svg>
              </div>
            </li>
          ),
        )}
      </ul>
      <div className="mr-[14px] mb-0.5 ml-[15px] flex-1 bg-[#353535]" />

      {/* Playhead */}
      <div className="absolute top-[41px] bottom-0 left-[3px] flex w-6 flex-col items-center">
        <Svg w={24} h={28} className="text-[#2d8ceb]">
          <path d="M2 0h20q2 0 2 2v9L13 28h-2L0 11V2q0-2 2-2z" />
          <path d="M11 13h2v15h-2z" fill="#8fa2b5" />
        </Svg>
        <span className="w-0.5 flex-1 bg-[#2d8ceb]" />
      </div>
    </div>
  )
}

function Timeline() {
  return (
    <section className="ml-0.5 flex min-h-0 flex-1 flex-col border-x-2 border-t-2 border-[#3a85d8] bg-[#282828]">
      <div className="flex h-[52px] shrink-0 items-center pl-5 text-[21px]">
        <CloseX />
        <span className="mb-1 ml-5 size-5 bg-[#a99878]" />
        <h2 className="pr-[18px] pl-[22px] text-[#d0d0d0]">Comp 1</h2>
        <MenuLines />
      </div>

      <div className="flex min-h-0 flex-1">
        <Outline />
        <Tracks />
        <div className="flex w-[34px] flex-col pt-[76px] text-[#b4b4b4]">
          <div className="flex h-9 justify-center border-b-2 border-black">
            <Svg w={22} h={28}>
              <path d="M2 0h18q2 0 2 2v16l-11 10L0 18V2q0-2 2-2z" />
            </Svg>
          </div>
          <div className="flex h-[34px] items-center border-l-2 border-[#1b1b1b]">
            <Svg w={32} h={26}>
              <path d="M17 5h13v14H17z" />
              <path d="M1 17L15 3v12M1 17h10" fill="none" stroke="currentColor" strokeWidth="2.500" />
              <circle cx="14" cy="18" r="6" fill="#282828" stroke="currentColor" strokeWidth="2.500" />
            </Svg>
          </div>
          <div className="flex-1 border-l-2 border-[#1b1b1b] bg-[#232323]" />
        </div>
      </div>

      {/* Footer, runs off the bottom of the window */}
      <footer className="flex h-[22px] shrink-0 items-start overflow-hidden bg-[#232323] text-[#b4b4b4]">
        <div className="flex w-[1680px] items-start border-t-2 border-black bg-[#282828]">
          <div className="flex w-[870px] gap-[10px] pt-1 pl-[10px]">
            <button aria-label="Layer switches">
              <Svg w={24} h={24}>
                <path d="M1 16V1h12v4M6 20V6h12v4M11 11h12v12H11z" fill="none" stroke="currentColor" strokeWidth="2" />
                <path d="M9 11h8v2H9zM14 15h6v2h-6z" />
              </Svg>
            </button>
            <button aria-label="Transfer controls" className="pl-0.5 text-[#2d8ceb]">
              <Svg w={26} h={24}>
                <circle cx="10" cy="9" r="8" fill="none" stroke="currentColor" strokeWidth="2.500" />
                <path d="M10 8h14v12H10z" fill="#1a5c9c" stroke="currentColor" strokeWidth="2" />
              </Svg>
            </button>
            <button aria-label="In and out panes">
              <Svg w={24} h={24}>
                <path d="M4 0h4v20H4L0 11l4-4zM16 0h4v7l4 4-4 9h-4z" />
                <path d="M8 0h8v20H8z" fill="#6d6d6d" />
              </Svg>
            </button>
          </div>
          <button className="mt-px h-[34px] w-[328px] shrink-0 rounded border-2 border-[#323232] bg-[#1d1d1d] text-[21px] leading-6 text-[#9a9a9a]">
            Toggle Switches / Modes
          </button>
          <div className="flex items-start pt-2 pl-[277px]">
            <Svg w={20} h={10}>
              <path d="M0 10l6-6 3 3 4-7 7 10z" />
            </Svg>
            <input
              type="range"
              aria-label="Timeline zoom"
              defaultValue="0"
              className="mx-6 h-[10px] w-24 appearance-none bg-[linear-gradient(#404040,#404040)] bg-[length:100%_4px] bg-center bg-no-repeat [&::-webkit-slider-thumb]:size-5 [&::-webkit-slider-thumb]:appearance-none [&::-webkit-slider-thumb]:rounded-full [&::-webkit-slider-thumb]:border-4 [&::-webkit-slider-thumb]:border-[#8f8f8f] [&::-webkit-slider-thumb]:bg-[#282828]"
            />
            <Svg w={32} h={14}>
              <path d="M0 14l8-10 4 5 6-9 13 14z" />
            </Svg>
          </div>
        </div>
      </footer>
    </section>
  )
}

export default function App() {
  return (
    <div className="flex h-screen flex-col overflow-hidden bg-[#171717] font-['Open_Sans','Noto_Sans',sans-serif]">
      <TitleBar />
      <ToolBar />
      <div className="mt-1 mb-2 flex shrink-0 gap-2 pl-0.5">
        <ProjectPanel />
        <CompositionPanel />
        <SidePanels />
      </div>
      <Timeline />
    </div>
  )
}
